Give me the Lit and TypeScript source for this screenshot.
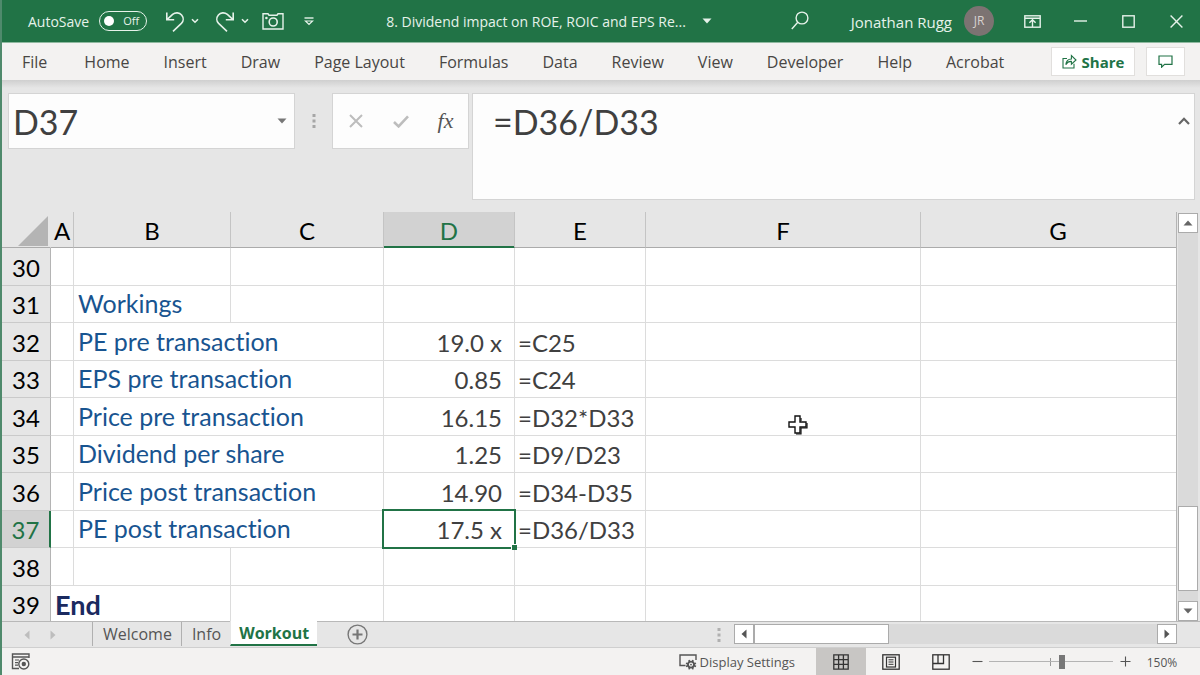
import { LitElement, html, css, svg } from "lit";
import { customElement, state } from "lit/decorators.js";
import { classMap } from "lit/directives/class-map.js";

interface Row {
  n: number;
  label?: string;
  value?: string;
  formula?: string;
  end?: string;
}

const MENU = ["File", "Home", "Insert", "Draw", "Page Layout", "Formulas", "Data", "Review", "View", "Developer", "Help", "Acrobat"];
const COLUMNS = ["A", "B", "C", "D", "E", "F", "G"];
const SHEETS = ["Welcome", "Info", "Workout"];
const ROWS: Row[] = [
  { n: 30 },
  { n: 31, label: "Workings" },
  { n: 32, label: "PE pre transaction", value: "19.0 x", formula: "=C25" },
  { n: 33, label: "EPS pre transaction", value: "0.85", formula: "=C24" },
  { n: 34, label: "Price pre transaction", value: "16.15", formula: "=D32*D33" },
  { n: 35, label: "Dividend per share", value: "1.25", formula: "=D9/D23" },
  { n: 36, label: "Price post transaction", value: "14.90", formula: "=D34-D35" },
  { n: 37, label: "PE post transaction", value: "17.5 x", formula: "=D36/D33" },
  { n: 38 },
  { n: 39, end: "End" },
];

const icon = (w: number, h: number, body: unknown) =>
  html`<svg width=${w} height=${h} viewBox="0 0 ${w} ${h}" fill="none" stroke="currentColor" aria-hidden="true">${body}</svg>`;

const chevron = () => icon(8, 6, svg`<path d="M1 1.2 4 4.2 7 1.2" stroke-width="1.6"/>`);
const triUp = () => icon(10, 6, svg`<path d="M0.5 5.5 5 0.5 9.5 5.5Z" fill="currentColor" stroke="none"/>`);
const triDown = () => icon(10, 6, svg`<path d="M0.5 0.5H9.5L5 5.5Z" fill="currentColor" stroke="none"/>`);
const triLeft = () => icon(6, 10, svg`<path d="M5.5 0.5V9.5L0.5 5Z" fill="currentColor" stroke="none"/>`);
const triRight = () => icon(6, 10, svg`<path d="M0.5 0.5V9.5L5.5 5Z" fill="currentColor" stroke="none"/>`);
const grip = () => icon(4, 16, svg`<g fill="currentColor" stroke="none"><rect x="0.5" y="1" width="3" height="3"/><rect x="0.5" y="6.5" width="3" height="3"/><rect x="0.5" y="12" width="3" height="3"/></g>`);

@customElement("title-bar")
class TitleBar extends LitElement {
  static styles = css`
    :host {
      display: flex;
      align-items: center;
      height: 42px;
      background: #217346;
      color: #e6f2ea;
      border-bottom: 1px solid #8fb9a0;
      font: 15px/20px "Open Sans", "Noto Sans", sans-serif;
      flex: none;
    }
    button {
      display: flex;
      align-items: center;
      justify-content: center;
      background: none;
      border: 0;
      padding: 0;
      margin: 0;
      color: inherit;
      font: inherit;
    }
    svg { display: block; flex: none; }
    .text { padding-top: 2px; }
    .quick { display: flex; align-items: center; padding-left: 26px; }
    .autosave { gap: 10px; font-size: 14px; }
    .toggle {
      display: flex;
      align-items: center;
      justify-content: space-between;
      box-sizing: border-box;
      width: 48px;
      height: 20px;
      padding: 0 7px 0 4px;
      border: 1px solid currentColor;
      border-radius: 10px;
      font-size: 11px;
    }
    .knob { width: 10px; height: 10px; border-radius: 50%; background: #fff; }
    .undo { margin-left: 18px; }
    .drop { width: 20px; height: 24px; }
    .redo { margin-left: 10px; }
    .camera { margin-left: 7px; }
    .more { margin-left: 20px; }
    .doc { margin-left: 72px; gap: 16px; font-size: 14px; }
    .right { display: flex; align-items: center; margin-left: auto; }
    .search { margin-right: 42px; }
    .user { gap: 12px; margin-right: 14px; }
    .avatar {
      width: 30px;
      height: 30px;
      border-radius: 50%;
      background: #7c7372;
      color: #d8d2d0;
      font-size: 12px;
      line-height: 30px;
      text-align: center;
    }
    .win { width: 48px; height: 42px; }
  `;

  render() {
    return html`
      <div class="quick">
        <button class="autosave" role="switch" aria-checked="false">
          <span class="text">AutoSave</span><span class="toggle"><span class="knob"></span>Off</span>
        </button>
        <button class="undo" aria-label="Undo">
          ${icon(20, 22, svg`<path d="M1.8 2.5V9.8H9.2M2 9.6 7.6 4.4C10.4 2.2 14.4 2.4 16.6 5 18.8 7.6 18.6 11.2 16.4 13.4L8 21.4" stroke-width="1.6"/>`)}
        </button>
        <button class="drop" aria-label="Undo history">${chevron()}</button>
        <button class="redo" aria-label="Redo">
          ${icon(20, 22, svg`<path d="M18.2 2.5V9.8H10.8M18 9.6 12.4 4.4C9.6 2.2 5.6 2.4 3.4 5 1.2 7.6 1.4 11.2 3.6 13.4L12 21.4" stroke-width="1.6"/>`)}
        </button>
        <button class="drop" aria-label="Redo history">${chevron()}</button>
        <button class="camera" aria-label="Camera">
          ${icon(22, 18, svg`<path d="M1 1.8H6L7 3.2H15L16 1.8H21V17H1Z" stroke-width="1.4"/><circle cx="11.2" cy="10" r="4" stroke-width="1.6"/><circle cx="4.4" cy="6" r="1.3" fill="currentColor" stroke="none"/>`)}
        </button>
        <button class="more" aria-label="Customize Quick Access Toolbar">
          ${icon(10, 9, svg`<path d="M0.5 1H9.5" stroke-width="1.4"/><path d="M1.5 4 5 7.4 8.5 4Z" stroke-width="1.2"/>`)}
        </button>
      </div>
      <button class="doc"><span class="text">8. Dividend impact on ROE, ROIC and EPS Re...</span>${triDown()}</button>
      <div class="right">
        <button class="search" aria-label="Search">
          ${icon(18, 20, svg`<circle cx="11" cy="7" r="5.9" stroke-width="1.4"/><path d="M6.8 11.2 0.8 18" stroke-width="1.4"/>`)}
        </button>
        <button class="user"><span class="text">Jonathan Rugg</span><span class="avatar">JR</span></button>
        <button class="win" aria-label="Ribbon Display Options">
          ${icon(17, 13, svg`<rect x="0.8" y="0.8" width="15.4" height="11.4" stroke-width="1.4"/><path d="M1 3.2H16M8.5 12V5M5.4 7.8 8.5 4.8 11.6 7.8" stroke-width="1.4"/>`)}
        </button>
        <button class="win" aria-label="Minimize">${icon(13, 2, svg`<path d="M0 1H13" stroke-width="1.4"/>`)}</button>
        <button class="win" aria-label="Maximize">${icon(13, 13, svg`<rect x="0.8" y="0.8" width="11.4" height="11.4" stroke-width="1.4"/>`)}</button>
        <button class="win" aria-label="Close">${icon(13, 13, svg`<path d="M0.6 0.6 12.4 12.4M12.4 0.6 0.6 12.4" stroke-width="1.4"/>`)}</button>
      </div>
    `;
  }
}

@customElement("ribbon-tabs")
class RibbonTabs extends LitElement {
  static styles = css`
    :host {
      display: flex;
      align-items: center;
      height: 37px;
      padding: 0 15px 0 20px;
      background: #f3f2f1;
      color: #484644;
      font: 16px/24px "Open Sans", "Noto Sans", sans-serif;
      flex: none;
    }
    nav { display: flex; gap: 34px; }
    nav :first-child { padding-right: 3px; }
    button {
      display: flex;
      align-items: center;
      justify-content: center;
      gap: 5px;
      background: none;
      border: 0;
      padding: 0;
      color: inherit;
      font: inherit;
      white-space: nowrap;
    }
    .side { display: flex; gap: 11px; margin-left: auto; }
    .box {
      box-sizing: border-box;
      height: 29px;
      background: #fff;
      border: 1px solid #e1dfdd;
      color: #217346;
    }
    .share { width: 84px; font-size: 15px; font-weight: 700; }
    .comment { width: 39px; }
  `;

  render() {
    return html`
      <nav>${MENU.map((m) => html`<button>${m}</button>`)}</nav>
      <div class="side">
        <button class="box share">
          ${icon(15, 15, svg`<path d="M5 4.5H1V14H12V9.8M3.8 10.6C4.2 7 6.4 5 9.4 5V1.6L14 6 9.4 10.2V7.4C7 7.2 5.2 8.2 3.8 10.6Z" stroke-width="1.1"/>`)}
          Share
        </button>
        <button class="box comment" aria-label="Comments">
          ${icon(15, 13, svg`<path d="M1 1H14V9.4H6.6L3.6 12.2V9.4H1Z" stroke-width="1.2"/>`)}
        </button>
      </div>
    `;
  }
}

@customElement("formula-bar")
class FormulaBar extends LitElement {
  static styles = css`
    :host {
      display: flex;
      align-items: flex-start;
      padding: 13px 5px 12px 6px;
      background: linear-gradient(#cfcfcf, #e6e6e6 8px);
      color: #444;
      flex: none;
    }
    svg { display: block; }
    button {
      display: flex;
      align-items: center;
      justify-content: center;
      background: none;
      border: 0;
      padding: 0;
      color: inherit;
    }
    input, textarea {
      box-sizing: border-box;
      min-width: 0;
      border: 0;
      margin: 0;
      outline: 0;
      background: none;
      color: #404040;
      font: 34px/56px Lato, "Noto Sans", sans-serif;
    }
    .box { box-sizing: border-box; display: flex; background: #fdfdfd; border: 1px solid #d4d4d4; }
    .name { width: 287px; height: 56px; }
    .name input { flex: 1; padding: 2px 0 0 4px; }
    .name button { width: 24px; color: #777; }
    .grip { width: 37px; height: 56px; display: flex; align-items: center; justify-content: center; color: #a6a6a6; }
    .tools { width: 137px; height: 56px; }
    .tools button { flex: 1; color: #bdbdbd; }
    .tools .fx { color: #555; font: italic 22px/54px "Liberation Serif", serif; }
    .formula { flex: 1; height: 107px; margin-left: 3px; }
    .formula textarea { flex: 1; resize: none; padding: 0 0 0 20px; overflow: hidden; }
    .formula button { width: 20px; height: 54px; color: #666; }
  `;

  render() {
    return html`
      <div class="box name">
        <input aria-label="Name Box" .value=${"D37"} />
        <button aria-label="Open names">${triDown()}</button>
      </div>
      <span class="grip">${grip()}</span>
      <div class="box tools">
        <button aria-label="Cancel">${icon(14, 14, svg`<path d="M1 1 13 13M13 1 1 13" stroke-width="2"/>`)}</button>
        <button aria-label="Enter">${icon(16, 13, svg`<path d="M1 7 5.6 11.4 15 1.4" stroke-width="2.6"/>`)}</button>
        <button class="fx" aria-label="Insert Function">fx</button>
      </div>
      <div class="box formula">
        <textarea aria-label="Formula Bar" rows="1" .value=${"=D36/D33"}></textarea>
        <button aria-label="Collapse Formula Bar">${icon(12, 8, svg`<path d="M1 7 6 1.8 11 7" stroke-width="2.2"/>`)}</button>
      </div>
    `;
  }
}

@customElement("sheet-grid")
class SheetGrid extends LitElement {
  static styles = css`
    :host {
      display: flex;
      flex: 1;
      min-height: 0;
      background: #e6e6e6;
      font: 24px/30px Lato, "Noto Sans", sans-serif;
      font-variant-ligatures: none;
      color: #404040;
    }
    .view { position: relative; flex: 1; min-width: 0; overflow: hidden; border-right: 1px solid #b4b4b4; }
    table { width: 1194px; border-collapse: separate; border-spacing: 0; table-layout: fixed; background: #fff; }
    th, td {
      box-sizing: border-box;
      padding: 2px 0 0;
      font-weight: 400;
      border-right: 1px solid #dcdcdc;
      border-bottom: 1px solid #dcdcdc;
      white-space: nowrap;
    }
    .c-row { width: 49px; }
    .c-a { width: 23px; }
    .c-b { width: 157px; }
    .c-c { width: 153px; }
    .c-d, .c-e { width: 131px; }
    thead th { height: 36px; background: #e6e6e6; color: #000; border-right-color: #c4c4c4; border-bottom-color: #ababab; }
    thead .on { background: #d2d2d2; color: #217346; border-bottom-color: #217346; box-shadow: inset 0 -1px #217346; }
    thead .corner { border-right-color: #e6e6e6; }
    .corner svg { display: block; margin: 0 2px 0 auto; }
    tbody th { background: #e6e6e6; color: #000; border-right-color: #b4b4b4; border-bottom-color: #cacaca; }
    tbody .on { background: #d2d2d2; color: #217346; border-right: 2px solid #217346; }
    tbody tr { height: 38px; }
    tbody tr:nth-child(even) { height: 37px; }
    .label { color: #185490; font-size: 25px; padding: 0 0 2px 4px; }
    .value { text-align: right; padding-right: 12px; }
    .formula { padding-left: 3px; }
    .end { color: #1b2a60; font-size: 27px; font-weight: 700; padding-left: 4px; }
    .picked { position: relative; }
    .frame { position: absolute; inset: -2px; border: 2px solid #217346; }
    .handle { position: absolute; right: -3px; bottom: -3px; width: 5px; height: 5px; background: #217346; border: 1px solid #fff; border-width: 1px 0 0 1px; }
    .cursor { position: absolute; left: 785px; top: 202px; display: block; }
    .scroll {
      display: flex;
      flex-direction: column;
      width: 20px;
      margin: 1px 2px 0 1px;
      background: #dadada;
      flex: none;
    }
    .scroll button, .thumb { box-sizing: border-box; background: #fff; border: 1px solid #ababab; padding: 0; color: #666; flex: none; }
    .scroll button { display: flex; align-items: center; justify-content: center; height: 20px; }
    .space { flex: 276; }
    .thumb { flex: 84; }
    .rest { flex: 10; }
  `;

  private cells(r: Row) {
    if (r.end) return html`<td class="end" colspan="2">${r.end}</td><td></td><td></td><td></td><td></td><td></td>`;
    if (!r.value) return html`<td></td><td class="label">${r.label ?? ""}</td><td></td><td></td><td></td><td></td><td></td>`;
    const picked = r.n === 37;
    return html`
      <td></td>
      <td class="label" colspan="2">${r.label}</td>
      <td class=${classMap({ value: true, picked })}>
        ${r.value}${picked ? html`<span class="frame"><span class="handle"></span></span>` : ""}
      </td>
      <td class="formula">${r.formula}</td>
      <td></td>
      <td></td>
    `;
  }

  render() {
    return html`
      <div class="view">
        <table>
          <colgroup>
            <col class="c-row" /><col class="c-a" /><col class="c-b" /><col class="c-c" /><col class="c-d" /><col class="c-e" /><col /><col />
          </colgroup>
          <thead>
            <tr>
              <th class="corner">${icon(30, 30, svg`<path d="M30 0V30H0Z" fill="#b4b4b4" stroke="none"/>`)}</th>
              ${COLUMNS.map((c) => html`<th class=${classMap({ on: c === "D" })} scope="col">${c}</th>`)}
            </tr>
          </thead>
          <tbody>
            ${ROWS.map((r) => html`<tr><th class=${classMap({ on: r.n === 37 })} scope="row">${r.n}</th>${this.cells(r)}</tr>`)}
          </tbody>
        </table>
        <svg class="cursor" width="21" height="21" viewBox="0 0 21 21" aria-hidden="true">
          <path d="M8 2H13V8H19V13H13V19H8V13H2V8H8Z" fill="#fff" stroke="#111" stroke-width="1.4" />
          <path d="M14 4V7M14 14V20H9M20 9V14H14" fill="none" stroke="#111" stroke-width="1.2" />
        </svg>
      </div>
      <div class="scroll">
        <button aria-label="Scroll up">${triUp()}</button>
        <span class="space"></span><span class="thumb"></span><span class="rest"></span>
        <button aria-label="Scroll down">${triDown()}</button>
      </div>
    `;
  }
}

@customElement("sheet-tabs")
class SheetTabs extends LitElement {
  @state() private active = "Workout";

  static styles = css`
    :host {
      box-sizing: border-box;
      display: flex;
      height: 27px;
      background: #e6e6e6;
      border-top: 1px solid #b8b8b8;
      border-bottom: 1px solid #cfcfcf;
      color: #555;
      font: 16px/22px "Open Sans", "Noto Sans", sans-serif;
      flex: none;
    }
    button { background: none; border: 0; padding: 0; color: inherit; font: inherit; }
    svg { display: block; margin: auto; }
    .nav { display: flex; width: 90px; padding-left: 12px; box-sizing: border-box; color: #bdbdbd; }
    .nav button { width: 26px; }
    .tabs { display: flex; padding: 0 0 1px; }
    .tab { padding: 0 9px 1px 10px; border-left: 1px solid #b0b0b0; }
    .on { background: #fff; color: #217346; font-weight: 700; padding: 0 8px; border-bottom: 2px solid #217346; border-left-color: #e6e6e6; margin-top: -1px; }
    .add { margin-left: 30px; color: #777; }
    .grip { margin-left: auto; width: 4px; display: flex; color: #b0b0b0; }
    .bar { display: flex; width: 37%; height: 20px; box-sizing: border-box; margin: 2px 23px 0 13px; background: #dadada; }
    .bar button, .thumb { box-sizing: border-box; background: #fff; border: 1px solid #ababab; color: #555; flex: none; }
    .bar button { width: 20px; }
    .thumb { flex: 134; }
    .rest { flex: 269; }
  `;

  render() {
    return html`
      <div class="nav">
        <button aria-label="Previous sheet">${triLeft()}</button>
        <button aria-label="Next sheet">${triRight()}</button>
      </div>
      <div class="tabs" role="tablist">
        ${SHEETS.map(
          (s) => html`<button role="tab" class=${classMap({ tab: true, on: s === this.active })} @click=${() => (this.active = s)}>${s}</button>`
        )}
      </div>
      <button class="add" aria-label="New sheet">
        ${icon(21, 21, svg`<circle cx="10.5" cy="10.5" r="9.4" stroke-width="1.4"/><path d="M10.5 5.5V15.5M5.5 10.5H15.5" stroke-width="2.2"/>`)}
      </button>
      <span class="grip">${grip()}</span>
      <div class="bar">
        <button aria-label="Scroll left">${triLeft()}</button>
        <span class="thumb"></span><span class="rest"></span>
        <button aria-label="Scroll right">${triRight()}</button>
      </div>
    `;
  }
}

@customElement("status-bar")
class StatusBar extends LitElement {
  static styles = css`
    :host {
      display: flex;
      align-items: center;
      height: 27px;
      padding: 0 22px 0 9px;
      background: #f3f2f1;
      color: #555;
      font: 12px/20px "Open Sans", "Noto Sans", sans-serif;
      flex: none;
    }
    button {
      display: flex;
      align-items: center;
      justify-content: center;
      gap: 3px;
      background: none;
      border: 0;
      padding: 0;
      color: inherit;
      font: inherit;
      white-space: nowrap;
    }
    .display { margin-left: auto; margin-right: 21px; font-size: 13px; }
    .view { width: 50px; height: 27px; color: #333; }
    .on { background: #c8c6c4; }
    .step { width: 22px; height: 27px; }
    .slider { position: relative; display: flex; width: 124px; margin: 0 1px 0 1px; }
    .tick { position: absolute; left: 61px; top: 6px; width: 1px; height: 8px; background: #999; }
    input { -webkit-appearance: none; appearance: none; position: relative; width: 100%; height: 20px; margin: 0; background: none; }
    input::-webkit-slider-runnable-track { height: 14px; background: linear-gradient(#b4b4b4, #b4b4b4) center / 100% 1px no-repeat; }
    input::-webkit-slider-thumb { -webkit-appearance: none; width: 6px; height: 14px; background: #777; }
    .pct { width: 32px; margin-left: 10px; padding-top: 2px; color: #555; }
  `;

  render() {
    return html`
      <button aria-label="Macro recording">
        ${icon(20, 18, svg`<path d="M18 5V1H1.5V15.5H8M1.5 4H18" stroke-width="1.4"/><path d="M4 7H8M4 9.6H7M4 12.2H7" stroke-width="1.2"/><circle cx="12.8" cy="11" r="5" stroke-width="1.4"/><circle cx="12.8" cy="11" r="2.2" fill="currentColor" stroke="none"/>`)}
      </button>
      <button class="display">
        ${icon(18, 16, svg`<path d="M17 6V1H1V11.5H6.5" stroke-width="1.4"/><circle cx="12" cy="10.6" r="3" stroke-width="1.8"/><circle cx="12" cy="10.6" r="0.9" fill="currentColor" stroke="none"/><path d="M10 6 10.6 8M14 6 13.4 8M10 15.4 10.6 13.2M14 15.4 13.4 13.2M7 9.2 9.2 10M7 12.4 9.2 11.4M17 9.2 14.8 10M17 12.4 14.8 11.4" stroke-width="1.6"/>`)}
        Display Settings
      </button>
      <button class="view on" aria-label="Normal">
        ${icon(16, 16, svg`<path d="M0.8 0.8H15.2V15.2H0.8ZM0.8 5.6H15.2M0.8 10.4H15.2M5.6 0.8V15.2M10.4 0.8V15.2" stroke-width="1.3"/>`)}
      </button>
      <button class="view" aria-label="Page Layout">
        ${icon(18, 16, svg`<rect x="0.8" y="0.8" width="16.4" height="14.4" stroke-width="1.3"/><rect x="4.5" y="3.2" width="9" height="9.8" stroke-width="1.2"/><path d="M6.5 5.8H11.5M6.5 8H11.5M6.5 10.3H11.5" stroke-width="1"/>`)}
      </button>
      <button class="view" aria-label="Page Break Preview">
        ${icon(18, 16, svg`<rect x="0.8" y="0.8" width="16.4" height="14.4" stroke-width="1.3"/><path d="M6 1V9.5M11.5 1V9.5H1" stroke-width="1.3"/>`)}
      </button>
      <button class="step" aria-label="Zoom out">${icon(11, 11, svg`<path d="M0.5 5.5H10.5" stroke-width="1.1"/>`)}</button>
      <div class="slider">
        <span class="tick"></span>
        <input type="range" aria-label="Zoom" min="0" max="100" .value=${"59"} />
      </div>
      <button class="step" aria-label="Zoom in">${icon(11, 11, svg`<path d="M0.5 5.5H10.5M5.5 0.5V10.5" stroke-width="1.1"/>`)}</button>
      <button class="pct">150%</button>
    `;
  }
}

@customElement("app-root")
class AppRoot extends LitElement {
  static styles = css`
    :host {
      box-sizing: border-box;
      display: flex;
      flex-direction: column;
      height: 100vh;
      border-left: 2px solid #4f8a6c;
      background: #e6e6e6;
      overflow: hidden;
    }
  `;

  render() {
    return html`
      <title-bar></title-bar>
      <ribbon-tabs></ribbon-tabs>
      <formula-bar></formula-bar>
      <sheet-grid></sheet-grid>
      <sheet-tabs></sheet-tabs>
      <status-bar></status-bar>
    `;
  }
}
